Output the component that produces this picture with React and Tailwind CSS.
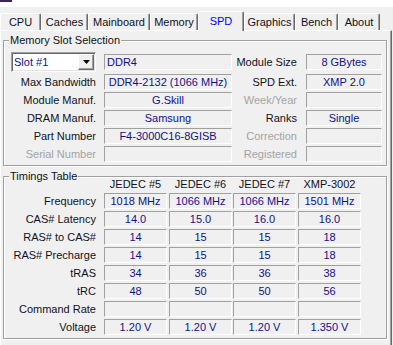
import React from 'react';

const tabs = [
  { name: 'CPU', w: 'w-[41px]' },
  { name: 'Caches', w: 'w-[47px]' },
  { name: 'Mainboard', w: 'w-[62px]' },
  { name: 'Memory', w: 'w-[48px]' },
  { name: 'SPD', w: 'w-[46px]', active: true },
  { name: 'Graphics', w: 'w-[51px]' },
  { name: 'Bench', w: 'w-[43px]' },
  { name: 'About', w: 'w-[42px]' },
];

const timings = [
  ['Frequency', ['1018 MHz', '1066 MHz', '1066 MHz', '1501 MHz']],
  ['CAS# Latency', ['14.0', '15.0', '16.0', '16.0']],
  ['RAS# to CAS#', ['14', '15', '15', '18']],
  ['RAS# Precharge', ['14', '15', '15', '18']],
  ['tRAS', ['34', '36', '36', '38']],
  ['tRC', ['48', '50', '50', '56']],
  ['Command Rate', ['', '', '', '']],
  ['Voltage', ['1.20 V', '1.20 V', '1.20 V', '1.350 V']],
];

const colGap = ['ml-[8px]', 'ml-[2px]', 'ml-[1px]', 'ml-[2px]'];

function Field({ className = '', children }) {
  return (
    <div className={`h-[16px] shrink-0 border border-t-[#a0a0a0] border-l-[#a0a0a0] border-b-white border-r-white leading-[14px] text-center text-[#10108a] whitespace-nowrap overflow-hidden ${className}`}>
      {children}
    </div>
  );
}

function Label({ className = '', dim, children }) {
  return (
    <div className={`shrink-0 text-right leading-[16px] whitespace-nowrap ${dim ? 'text-[#a3a3a3]' : 'text-[#101020]'} ${className}`}>
      {children}
    </div>
  );
}

function Group({ title, className = '', children }) {
  return (
    <div className={`relative ml-[2px] w-[384px] border border-[#a0a0a0] shadow-[inset_1px_1px_0_#fff,1px_1px_0_#fff] ${className}`}>
      <span className="absolute top-[-8px] left-[5px] bg-[#f0f0f0] px-px leading-[14px] text-[#101020]">{title}</span>
      {children}
    </div>
  );
}

function SlotRow({ left, leftLabel, leftDim, rightLabel, rightDim, right }) {
  return (
    <div className="flex h-[16px] items-center">
      <Label className="w-[85px]" dim={leftDim}>{leftLabel}</Label>
      <Field className="ml-[8px] w-[128px]">{left}</Field>
      <Label className="w-[65px]" dim={rightDim}>{rightLabel}</Label>
      <Field className="ml-[9px] w-[76px]">{right}</Field>
    </div>
  );
}

export default function App() {
  return (
    <div className="w-[393px] h-[345px] overflow-hidden bg-[#f0f0f0] text-[11px] [font-family:'Liberation_Sans',Arial,sans-serif]">
      <div className="h-[7px] bg-white">
        <div className="w-[12px] h-[2px] bg-[#3d2160]" />
      </div>

      <div className="flex h-[23px] items-end">
        {tabs.map((t) =>
          t.active ? (
            <div key={t.name} className={`relative z-10 -mb-px flex h-[20px] ${t.w} items-center justify-center rounded-t-[2px] border-t border-l border-r border-t-white border-l-white border-r-[#696969] bg-[#f0f0f0] text-[#0000ff] shadow-[inset_-1px_0_0_#a0a0a0]`}>
              {t.name}
            </div>
          ) : (
            <div key={t.name} className={`flex h-[17px] ${t.w} items-center justify-center rounded-t-[2px] border-t border-l border-r border-t-white border-l-white border-r-[#696969] text-[#101020] shadow-[inset_-1px_0_0_#a0a0a0]`}>
              {t.name}
            </div>
          )
        )}
      </div>

      <div className="w-[392px] h-[320px] border-t border-l border-r border-t-white border-l-white border-r-[#696969] shadow-[inset_-1px_0_0_#a0a0a0]">
        <Group title="Memory Slot Selection" className="mt-[9px] pt-[11px] pb-[3px] pl-[7px]">
          <div className="flex flex-col gap-[2px]">
            <div className="flex h-[20px] items-center">
              <div className="flex h-[20px] w-[85px] border border-t-[#a0a0a0] border-l-[#a0a0a0] border-b-white border-r-white shadow-[inset_1px_1px_0_#696969,inset_-1px_-1px_0_#e3e3e3] bg-white p-px">
                <div className="flex-1 pl-[1px] leading-[16px] text-[#10108a]">Slot #1</div>
                <div className="flex w-[16px] items-center justify-center border border-t-white border-l-white border-b-[#696969] border-r-[#696969] bg-[#f0f0f0] shadow-[inset_-1px_-1px_0_#a0a0a0]">
                  <svg width="7" height="4" viewBox="0 0 7 4"><path d="M0 0h7L3.5 4z" fill="#000" /></svg>
                </div>
              </div>
              <Field className="ml-[8px] w-[128px] !text-left pl-[2px]">DDR4</Field>
              <Label className="w-[65px]">Module Size</Label>
              <Field className="ml-[9px] w-[76px]">8 GBytes</Field>
            </div>
            <SlotRow leftLabel="Max Bandwidth" left="DDR4-2132 (1066 MHz)" rightLabel="SPD Ext." right="XMP 2.0" />
            <SlotRow leftLabel="Module Manuf." left="G.Skill" rightLabel="Week/Year" rightDim right="" />
            <SlotRow leftLabel="DRAM Manuf." left="Samsung" rightLabel="Ranks" right="Single" />
            <SlotRow leftLabel="Part Number" left="F4-3000C16-8GISB" rightLabel="Correction" rightDim right="" />
            <SlotRow leftLabel="Serial Number" leftDim left="" rightLabel="Registered" rightDim right="" />
          </div>
        </Group>

        <Group title="Timings Table" className="mt-[10px] pb-[3px] pl-[7px]">
          <div className="flex h-[15px] items-center">
            <div className="w-[85px]" />
            {['JEDEC #5', 'JEDEC #6', 'JEDEC #7', 'XMP-3002'].map((h, i) => (
              <div key={h} className={`${colGap[i]} w-[63px] text-center leading-[15px] text-[#101020]`}>{h}</div>
            ))}
          </div>
          <div className="mt-[1px] flex flex-col gap-[2px]">
            {timings.map(([label, vals]) => (
              <div key={label} className="flex h-[16px] items-center">
                <Label className="w-[85px]">{label}</Label>
                {vals.map((v, i) => (
                  <Field key={i} className={`${colGap[i]} w-[63px]`}>{v}</Field>
                ))}
              </div>
            ))}
          </div>
        </Group>
      </div>
    </div>
  );
}
